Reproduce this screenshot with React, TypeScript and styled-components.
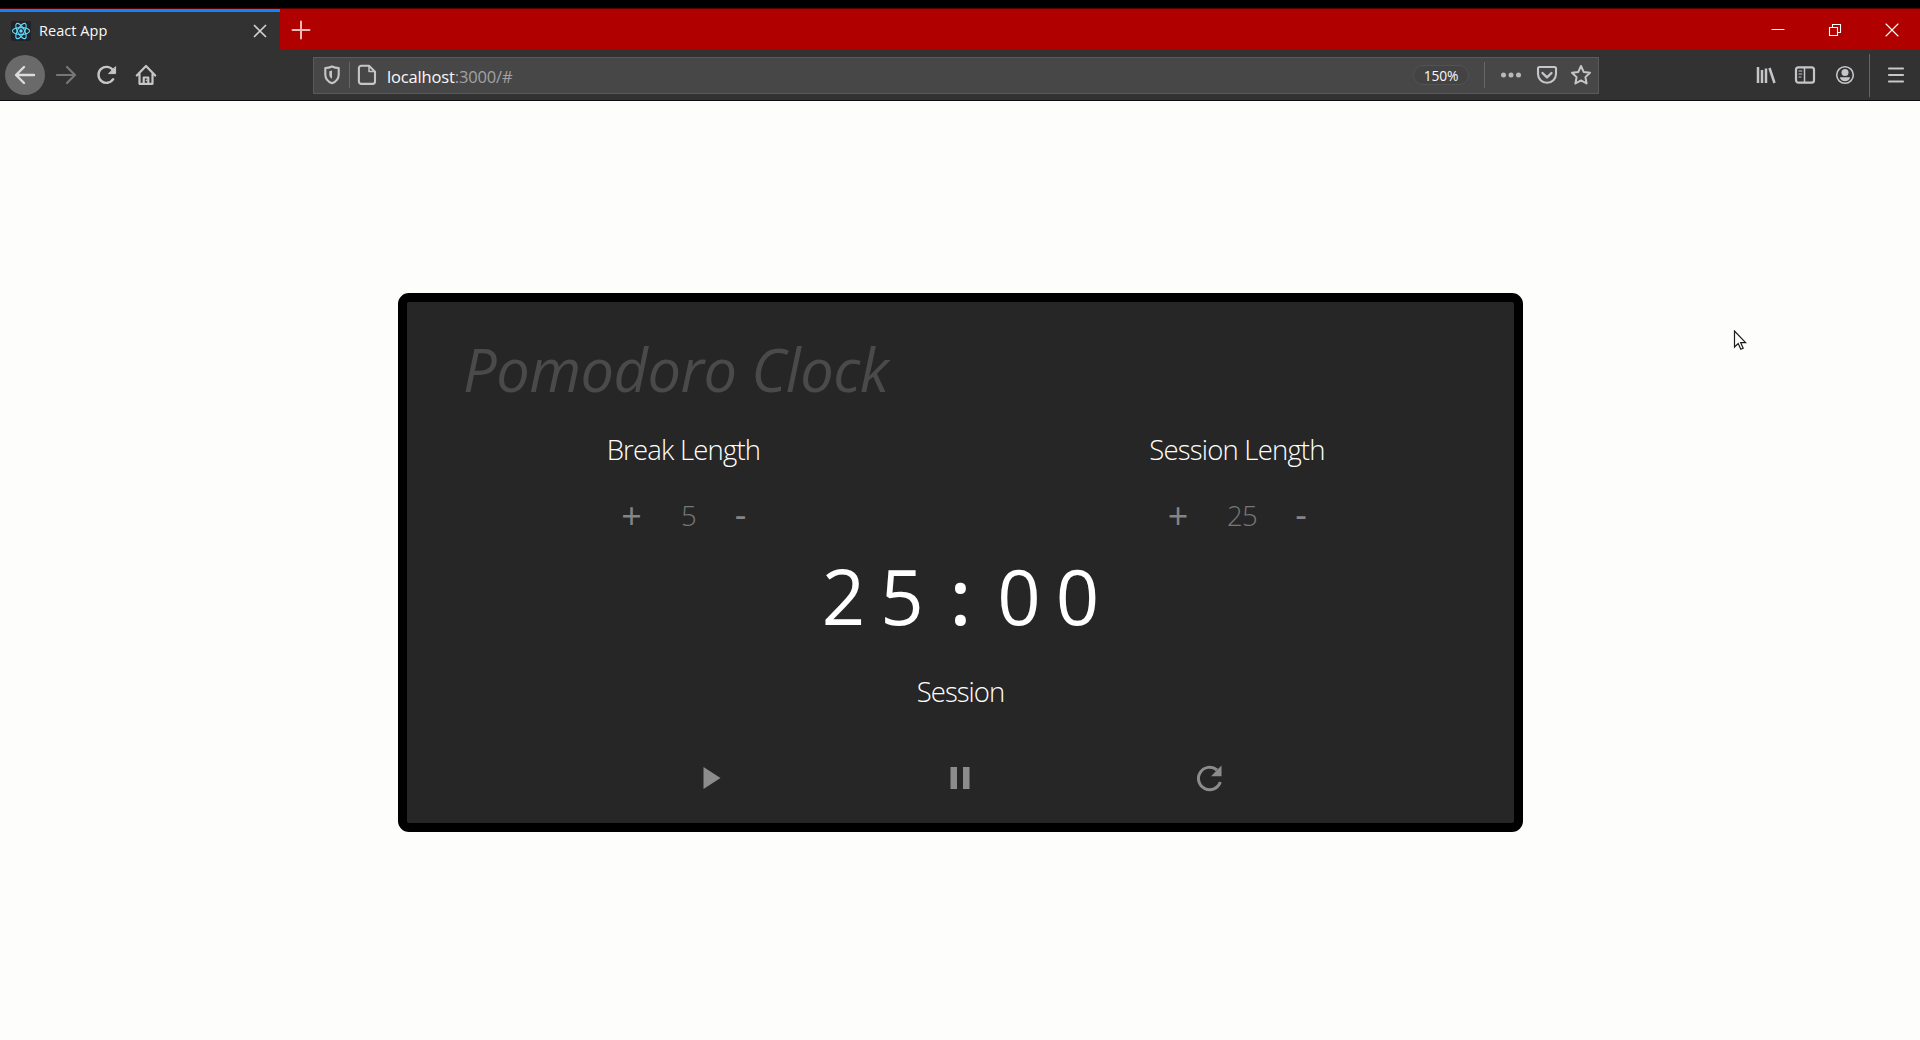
import React from 'react';
import styled, { createGlobalStyle } from 'styled-components';

const GlobalStyle = createGlobalStyle`
  * { box-sizing: border-box; }
  body {
    margin: 0;
    background: #fdfdfc;
    font-family: 'Open Sans', 'Noto Sans', sans-serif;
    overflow: hidden;
  }
`;

const Screen = styled.div`
  width: 1920px;
  height: 1040px;
  display: flex;
  flex-direction: column;
  border-top: 8px solid #000;
  background: #fdfdfc;
`;

const TabStrip = styled.div`
  height: 42px;
  display: flex;
  background: #b00000;
  border-top: 1px solid #5a0000;
`;

const Tab = styled.div`
  width: 280px;
  display: flex;
  align-items: center;
  padding: 0 13px 0 11px;
  background: #323233;
  border-top: 3px solid #0a84ff;
`;

const TabTitle = styled.span`
  flex: 1;
  margin-left: 8px;
  font-size: 14.5px;
  letter-spacing: 0.05px;
  line-height: 20px;
  color: #f9f9fa;
`;

const Slot = styled.div<{ $w: number; $ml?: number }>`
  width: ${(p) => p.$w}px;
  margin-left: ${(p) => p.$ml ?? 0}px;
  flex: none;
  display: flex;
  align-items: center;
  justify-content: center;

  svg { flex: none; }
`;

const WindowButtons = styled.div`
  margin-left: auto;
  display: flex;
`;

const Toolbar = styled.div`
  height: 51px;
  display: flex;
  align-items: center;
  padding: 0 0 0 5px;
  background: #323233;
  border-bottom: 1px solid #0c0c0d;
`;

const BackButton = styled.div`
  width: 40px;
  height: 40px;
  flex: none;
  border-radius: 50%;
  background: #6a6a6b;
  display: flex;
  align-items: center;
  justify-content: center;
`;

const UrlBar = styled.div`
  width: 1286px;
  height: 37px;
  margin-left: 146px;
  display: flex;
  align-items: center;
  background: #474748;
  border: 1px solid #5a5a5a;
`;

const Divider = styled.div<{ $h: number }>`
  width: 1px;
  height: ${(p) => p.$h}px;
  flex: none;
  background: #666667;
`;

const Address = styled.div`
  flex: 1;
  margin-left: 3px;
  padding-top: 3px;
  font-size: 16.5px;
  line-height: 22px;
  letter-spacing: -0.15px;
  color: #a2a2a4;
`;

const Host = styled.span`
  color: #f9f9fa;
`;

const ZoomLevel = styled.div`
  width: 56px;
  height: 20px;
  margin-right: 15px;
  border: 1px solid #525253;
  border-radius: 10px;
  background: #434344;
  color: #f9f9fa;
  font-size: 13.8px;
  line-height: 19px;
  letter-spacing: -0.1px;
  text-align: center;
`;

const RightTools = styled.div`
  margin-left: auto;
  padding-right: 1px;
  display: flex;
  align-items: center;
`;

const Page = styled.main`
  flex: 1;
  display: flex;
  justify-content: center;
  align-items: flex-start;
  padding: 192px 0 0 1px;
`;

const Card = styled.section`
  width: 1125px;
  height: 539px;
  border: 9px solid #000;
  border-radius: 11px;
  background: #262626;
  color: #fff;
  display: flex;
  flex-direction: column;
`;

const Title = styled.h1`
  margin: 26px 0 0 56px;
  height: 82px;
  font-size: 59.5px;
  line-height: 82px;
  font-weight: 400;
  font-style: italic;
  letter-spacing: -0.5px;
  color: #4a4a4b;
`;

const Lengths = styled.div`
  display: grid;
  grid-template-columns: 553px 1fr;
  height: 141px;
  padding-top: 22px;
`;

const LengthControl = styled.div`
  display: flex;
  flex-direction: column;
  align-items: center;
`;

const Label = styled.div`
  font-size: 27.5px;
  line-height: 36px;
  font-weight: 300;
  letter-spacing: -0.8px;
  white-space: nowrap;
`;

const Stepper = styled.div<{ $shift: number }>`
  display: flex;
  align-items: center;
  margin-top: 30px;
  margin-left: ${(p) => p.$shift}px;
  height: 36px;
`;

const StepButton = styled.button<{ $lift?: number }>`
  width: 20px;
  padding: 0 0 ${(p) => p.$lift ?? 0}px;
  border: 0;
  background: none;
  display: flex;
  justify-content: center;
  font: 400 36px/36px 'Open Sans', sans-serif;
  color: #858586;
`;

const Amount = styled.div<{ $w: number }>`
  width: ${(p) => p.$w}px;
  padding-left: 5px;
  text-align: center;
  font-size: 27.5px;
  line-height: 36px;
  font-weight: 300;
  letter-spacing: -0.6px;
  color: #777778;
`;

const Time = styled.div`
  height: 90px;
  display: flex;
  justify-content: center;
  font-size: 76px;
  line-height: 90px;
  font-weight: 400;
`;

const Digit = styled.span<{ $bold?: boolean }>`
  width: 58.5px;
  text-align: center;
  font-weight: ${(p) => (p.$bold ? 600 : 400)};
`;

const Phase = styled(Label)`
  text-align: center;
  margin-top: 33px;
  letter-spacing: -0.95px;
`;

const Actions = styled.div`
  display: flex;
  justify-content: center;
  align-items: center;
  margin: 52px 0 0 1px;
  height: 32px;
`;

const Pointer = styled.svg`
  position: absolute;
  left: 1733px;
  top: 330px;
`;

type GlyphProps = { w?: number; h?: number; color?: string; sw?: number; children: React.ReactNode };

const Glyph = ({ w = 20, h = 20, color = '#c6c6c9', sw = 2, children }: GlyphProps) => (
  <svg width={w} height={h} viewBox={`0 0 ${w} ${h}`} fill="none" stroke={color} strokeWidth={sw}
    strokeLinecap="round" strokeLinejoin="round">
    {children}
  </svg>
);

const ReactLogo = () => (
  <svg width="20" height="20" viewBox="0 0 20 20" fill="none" stroke="#61dafb" strokeWidth="1.1">
    <rect width="20" height="20" rx="2" fill="#20232a" stroke="none" />
    <circle cx="10" cy="10" r="1.7" fill="#61dafb" stroke="none" />
    <ellipse cx="10" cy="10" rx="8.6" ry="3.4" />
    <ellipse cx="10" cy="10" rx="8.6" ry="3.4" transform="rotate(60 10 10)" />
    <ellipse cx="10" cy="10" rx="8.6" ry="3.4" transform="rotate(120 10 10)" />
  </svg>
);

export default function App() {
  return (
    <>
      <GlobalStyle />
      <Screen>
        <TabStrip>
          <Tab>
            <ReactLogo />
            <TabTitle>React App</TabTitle>
            <Glyph w={14} h={14} sw={1.7} color="#d0d0d2"><path d="M1.5 1.5l11 11M12.5 1.5l-11 11" /></Glyph>
          </Tab>
          <Slot $w={42}>
            <Glyph w={20} h={20} sw={2} color="#efb8b8"><path d="M10 1.5v17M1.5 10h17" /></Glyph>
          </Slot>
          <WindowButtons>
            <Slot $w={57}>
              <Glyph w={14} h={14} sw={1} color="#fff"><path d="M1 6.5h12" /></Glyph>
            </Slot>
            <Slot $w={57}>
              <Glyph w={14} h={14} sw={1.1} color="#fff">
                <path d="M1.5 4.5h8v8h-8zM4.5 4.5v-3h8v8h-3" strokeLinejoin="miter" />
              </Glyph>
            </Slot>
            <Slot $w={57}>
              <Glyph w={14} h={14} sw={1.1} color="#fff"><path d="M1 1l12 12M13 1L1 13" /></Glyph>
            </Slot>
          </WindowButtons>
        </TabStrip>

        <Toolbar>
          <BackButton>
            <Glyph w={22} h={20} sw={2.4} color="#dcdcde"><path d="M20 10H2.5M10 2L2 10l8 8" /></Glyph>
          </BackButton>
          <Slot $w={41}>
            <Glyph w={22} h={20} sw={2.2} color="#77777a"><path d="M2 10h17.5M12 2l8 8-8 8" /></Glyph>
          </Slot>
          <Slot $w={37} $ml={2}>
            <Glyph w={22} h={20} sw={2.4}>
              <path d="M17.2 14.2A8 8 0 1 1 17 5.2" />
              <path d="M19.6 2v6.6h-6.6z" fill="#c6c6c9" strokeWidth="1" />
            </Glyph>
          </Slot>
          <Slot $w={42}>
            <Glyph w={22} h={22} sw={2.2}>
              <path d="M1.8 11.5L11 2l9.2 9.5M4.5 10v9.8h13V10" />
              <path d="M8.7 19.5v-6h4.6v6" />
              <path d="M11.4 16.3v.2" strokeWidth="1.4" />
            </Glyph>
          </Slot>

          <UrlBar>
            <Slot $w={35}>
              <Glyph w={18} h={20} sw={2.1}>
                <path d="M9 1.5c2 1 4.200 1.500 6.700 1.500v6.500c0 4-2.700 7.200-6.700 8.700-4-1.500-6.700-4.700-6.700-8.700V3C4.800 3 7 2.500 9 1.500z" />
                <path d="M9 5.600v8.200c-1.700-1-2.700-2.600-2.700-4.600V6.300z" fill="#c6c6c9" stroke="none" />
              </Glyph>
            </Slot>
            <Divider $h={26} />
            <Slot $w={34}>
              <Glyph w={20} h={22} sw={2.1}>
                <path d="M4.300 1.800h7.700l6 6V17.500a2.400 2.400 0 0 1-2.400 2.400H4.300a2.400 2.400 0 0 1-2.400-2.400V4.200a2.400 2.400 0 0 1 2.400-2.400z" />
                <path d="M12 2v5.500h5.700" strokeWidth="1.500" />
              </Glyph>
            </Slot>
            <Address><Host>localhost</Host>:3000/#</Address>
            <ZoomLevel>150%</ZoomLevel>
            <Divider $h={26} />
            <Slot $w={51}>
              <Glyph w={22} h={8} color="none">
                <circle cx="3.500" cy="4" r="2.500" fill="#b9b9bc" />
                <circle cx="11" cy="4" r="2.500" fill="#b9b9bc" />
                <circle cx="18.500" cy="4" r="2.500" fill="#b9b9bc" />
              </Glyph>
            </Slot>
            <Slot $w={22}>
              <Glyph w={22} h={20} sw={2.1}>
                <path d="M3.500 2h15a1.500 1.500 0 0 1 1.500 1.500V9a9 8.800 0 0 1-18 0V3.500A1.500 1.500 0 0 1 3.500 2z" />
                <path d="M6.500 8l4.500 4.300L15.500 8" strokeWidth="2.400" />
              </Glyph>
            </Slot>
            <Slot $w={28} $ml={12}>
              <Glyph w={28} h={22} sw={2}>
                <path d="M11 2l2.700 5.900 6.300.8-4.600 4.400 1.200 6.400L11 16.400l-5.600 3.100 1.200-6.400L2 8.700l6.300-.8z" />
              </Glyph>
            </Slot>
          </UrlBar>

          <RightTools>
            <Slot $w={39}>
              <Glyph w={22} h={20} sw={2.5}>
                <path d="M3 2v16M7 5v13M11 3.500v14.500M14.500 3l5 15" strokeLinecap="butt" />
              </Glyph>
            </Slot>
            <Slot $w={40}>
              <Glyph w={22} h={20} sw={2.2}>
                <rect x="2" y="2.300" width="18" height="15.400" rx="2.400" />
                <path d="M10.500 3v14" strokeWidth="1.500" />
                <path d="M5 6h2.800M5 9h2.800M5 12h2" strokeWidth="1.200" />
              </Glyph>
            </Slot>
            <Slot $w={40}>
              <Glyph w={20} h={20} sw={1.600}>
                <circle cx="10" cy="10" r="8.300" />
                <circle cx="10" cy="7.500" r="3.500" fill="#c6c6c9" stroke="none" />
                <path d="M4.800 12.200h10.400c-.7 2.500-2.600 4-5.200 4s-4.500-1.500-5.200-4z" fill="#c6c6c9" stroke="none" />
              </Glyph>
            </Slot>
            <Slot $w={8}><Divider $h={43} /></Slot>
            <Slot $w={46}>
              <Glyph w={18} h={18} sw={2.200}><path d="M2 2.500h14M2 9h14M2 15.500h14" /></Glyph>
            </Slot>
          </RightTools>
        </Toolbar>

        <Page>
          <Card>
            <Title>Pomodoro Clock</Title>
            <Lengths>
              <LengthControl>
                <Label>Break Length</Label>
                <Stepper $shift={5}>
                  <StepButton>+</StepButton>
                  <Amount $w={89}>5</Amount>
                  <StepButton $lift={3}>-</StepButton>
                </Stepper>
              </LengthControl>
              <LengthControl>
                <Label>Session Length</Label>
                <Stepper $shift={5}>
                  <StepButton>+</StepButton>
                  <Amount $w={103}>25</Amount>
                  <StepButton $lift={3}>-</StepButton>
                </Stepper>
              </LengthControl>
            </Lengths>
            <Time>
              <Digit>2</Digit>
              <Digit>5</Digit>
              <Digit $bold>:</Digit>
              <Digit>0</Digit>
              <Digit>0</Digit>
            </Time>
            <Phase>Session</Phase>
            <Actions>
              <Slot $w={248}>
                <Glyph w={18} h={26} color="none"><path d="M.5 2v22L17.500 13z" fill="#8c8c8d" /></Glyph>
              </Slot>
              <Slot $w={248}>
                <Glyph w={20} h={24} color="none"><path d="M.5 1H7v22H.5zM13 1h6.500v22H13z" fill="#8c8c8d" /></Glyph>
              </Slot>
              <Slot $w={250}>
                <Glyph w={28} h={28} color="#8c8c8d" sw={3}>
                  <path d="M25.300 18A11.200 11.200 0 1 1 22 6" strokeLinecap="butt" />
                  <path d="M26.500 1.500v10.800H16z" fill="#8c8c8d" stroke="none" />
                </Glyph>
              </Slot>
            </Actions>
          </Card>
        </Page>
      </Screen>
      <Pointer width="14" height="22" viewBox="0 0 14 22">
        <path d="M1.500 1v16l3.700-3.500 2.600 5.800 2.400-1.100-2.500-5.500h4.900z" fill="#fff" stroke="#1c1c1c" strokeWidth="1.200" />
      </Pointer>
    </>
  );
}
